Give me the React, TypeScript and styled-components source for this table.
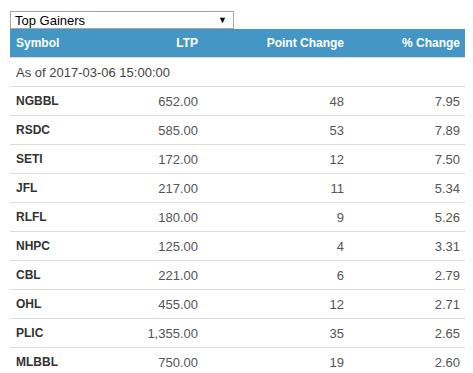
import React from "react";
import styled, { createGlobalStyle } from "styled-components";

const rows = [
  { symbol: "NGBBL", ltp: "652.00", point: "48", pct: "7.95" },
  { symbol: "RSDC", ltp: "585.00", point: "53", pct: "7.89" },
  { symbol: "SETI", ltp: "172.00", point: "12", pct: "7.50" },
  { symbol: "JFL", ltp: "217.00", point: "11", pct: "5.34" },
  { symbol: "RLFL", ltp: "180.00", point: "9", pct: "5.26" },
  { symbol: "NHPC", ltp: "125.00", point: "4", pct: "3.31" },
  { symbol: "CBL", ltp: "221.00", point: "6", pct: "2.79" },
  { symbol: "OHL", ltp: "455.00", point: "12", pct: "2.71" },
  { symbol: "PLIC", ltp: "1,355.00", point: "35", pct: "2.65" },
  { symbol: "MLBBL", ltp: "750.00", point: "19", pct: "2.60" },
];

export default function App() {
  return (
    <>
      <Global />
      <Wrap>
        <Select>
          <span>Top Gainers</span>
          <Arrow>▼</Arrow>
        </Select>
        <Table>
          <colgroup>
            <col style={{ width: 96 }} />
            <col style={{ width: 97 }} />
            <col style={{ width: 146 }} />
            <col style={{ width: 116 }} />
          </colgroup>
          <thead>
            <tr>
              <Th>Symbol</Th>
              <Th $right>LTP</Th>
              <Th $right>Point Change</Th>
              <Th $right>% Change</Th>
            </tr>
          </thead>
          <tbody>
            <tr>
              <AsOf colSpan={4}>As of 2017-03-06 15:00:00</AsOf>
            </tr>
            {rows.map((r) => (
              <tr key={r.symbol}>
                <Sym>{r.symbol}</Sym>
                <Num>{r.ltp}</Num>
                <Num>{r.point}</Num>
                <Num>{r.pct}</Num>
              </tr>
            ))}
          </tbody>
        </Table>
      </Wrap>
    </>
  );
}

// styling
const Global = createGlobalStyle`
  body {
    margin: 0;
    background: #fff;
    font-family: "Liberation Sans", Arial, sans-serif;
  }
`;

const Wrap = styled.div`
  padding: 11px 10px 0 10px;
`;

const Select = styled.div`
  box-sizing: border-box;
  width: 224px;
  height: 18px;
  border: 1px solid #a6a6a6;
  display: flex;
  align-items: center;
  justify-content: space-between;
  padding: 0 6px 0 4px;
  font-size: 13px;
  color: #000;
  background: #fff;
`;

const Arrow = styled.span`
  font-size: 9px;
  color: #000;
`;

const Table = styled.table`
  width: 455px;
  border-collapse: collapse;
  table-layout: fixed;
`;

const Th = styled.th<{ $right?: boolean }>`
  height: 28px;
  padding: 0 5px 0 6px;
  background: #4497c5;
  color: #fff;
  font-size: 12px;
  font-weight: bold;
  text-align: ${(p) => (p.$right ? "right" : "left")};
  border-bottom: 1px solid #ddd;
`;

const Cell = styled.td`
  height: 28px;
  padding: 0 5px 0 6px;
  border-bottom: 1px solid #ddd;
  white-space: nowrap;
`;

const AsOf = styled(Cell)`
  font-size: 13px;
  color: #444;
`;

const Sym = styled(Cell)`
  font-size: 12px;
  font-weight: bold;
  color: #333;
`;

const Num = styled(Cell)`
  font-size: 13px;
  color: #555;
  text-align: right;
`;
